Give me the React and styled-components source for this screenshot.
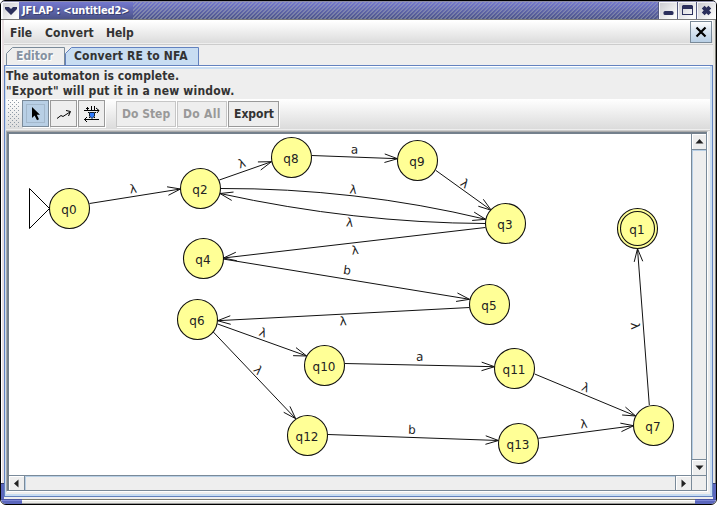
import React from "react";
import styled, { createGlobalStyle } from "styled-components";

const Global = createGlobalStyle`
  * { box-sizing: border-box; }
  html, body { margin: 0; padding: 0; background: #fff; overflow: hidden; }
  body { font-family: "DejaVu Sans Condensed", "DejaVu Sans", sans-serif; font-size: 12px; color: #333; }
  svg { display: block; }
`;

const Window = styled.div`
  width: 717px;
  height: 505px;
  display: flex;
  flex-direction: column;
  border: 1px solid #000;
  border-radius: 5px 5px 6px 6px;
  background: #eee;
  overflow: hidden;
`;

const TitleBar = styled.div`
  height: 19px;
  flex: none;
  display: flex;
  border-top: 1px solid #8c8ca8;
  border-bottom: 1px solid #7b7b7b;
  background: linear-gradient(#7478cf, #4a5288);
`;

const TitleText = styled.div`
  width: 114px;
  flex: none;
  padding-left: 3px;
  line-height: 17px;
  font-size: 11px;
  font-weight: bold;
  letter-spacing: -0.15px;
  white-space: pre;
  color: #fff;
  text-shadow: 1px 1px 0 #39406f;
`;

const Hatch = styled.div`
  flex: 1;
  background: repeating-linear-gradient(135deg, rgba(165, 172, 185, 0.5) 0 0.75px, transparent 1.2px 2.4px, rgba(165, 172, 185, 0.5) 2.83px);
`;

const TitleButton = styled.div`
  width: ${(p) => p.$w || 19}px;
  flex: none;
  border-left: 1px solid ${(p) => (p.$first ? "#fff" : "#555a80")};
  background: linear-gradient(135deg, #c9c9cf, #fafafa 85%);
  box-shadow: inset 1px 1px 0 #f6f6fa;
  display: flex;
  align-items: center;
  justify-content: center;
`;

const Body = styled.div`
  flex: 1;
  min-height: 0;
  display: flex;
`;

const LeftEdge = styled.div`
  width: 3px;
  border-left: 1px solid #fff;
  background: #e8dfe2;
  display: flex;
  flex-direction: column;
  justify-content: flex-end;
`;

const RightEdge = styled.div`
  width: 3px;
  border-right: 1px solid #84847c;
  background: #e6e6e2;
  display: flex;
  flex-direction: column;
  justify-content: flex-end;
`;

const SideGrip = styled.div`
  height: 16px;
  margin: 0 ${(p) => (p.$right ? -1 : 0)}px 0 ${(p) => (p.$right ? 0 : -1)}px;
  background: #5b67bd;
  border-top: 1px solid #39406f;
`;

const BottomEdge = styled.div`
  height: 5px;
  flex: none;
  display: flex;
  background: linear-gradient(#77796f 0 1px, #fff 1px 2px, #e9e9e5 2px 4px, #999 4px);
`;

const Grip = styled.div`
  width: 21px;
  background: linear-gradient(#4a55a5 0 1px, #7c86d8 1px 2px, #5b67bd 2px);
`;

const Spacer = styled.div`
  flex: 1;
`;

const Content = styled.div`
  flex: 1;
  min-width: 0;
  display: flex;
  flex-direction: column;
  padding-bottom: 2px;
  font-weight: bold;
`;

const MenuBar = styled.div`
  height: 25px;
  flex: none;
  display: flex;
  background: linear-gradient(#fff 5%, #dadada);
  border-bottom: 1px solid #ccc;
  box-shadow: inset 0 -1px 0 #eee;
  padding: 1px 1px 0 6px;
`;

const MenuItem = styled.div`
  width: ${(p) => p.$w}px;
  line-height: 24px;
  letter-spacing: ${(p) => p.$ls || 0}px;
`;

const CloseButton = styled.div`
  width: 22px;
  height: 22px;
  border: 1px solid #7a8a99;
  background: linear-gradient(#fff, #dfe9f3 35%, #b8cfe5);
  display: flex;
  align-items: center;
  justify-content: center;
`;

const Tabs = styled.div`
  height: 20px;
  flex: none;
  display: flex;
  padding: 2px 0 0 2px;
`;

const Tab = styled.div`
  width: ${(p) => p.$w}px;
  height: 19px;
  display: grid;
  margin-bottom: -1px;
  & > * { grid-area: 1 / 1; }
`;

const TabLabel = styled.div`
  padding-left: ${(p) => p.$pad}px;
  line-height: 18px;
  color: ${(p) => (p.$dim ? "#8592a2" : "#333")};
  text-shadow: ${(p) => (p.$dim ? "1px 1px 0 #fff" : "none")};
  letter-spacing: ${(p) => p.$ls || 0}px;
  white-space: pre;
`;

const Pane = styled.div`
  flex: 1;
  min-height: 0;
  display: flex;
  flex-direction: column;
  border: 1px solid #6382bf;
  box-shadow: inset -2px -2px 0 #c8ddf2, inset 1px 0 0 #c8ddf2;
  padding: 0 2px 2px 1px;
`;

const PaneTop = styled.div`
  height: 3px;
  flex: none;
  background: linear-gradient(#fff 0 1px, #c8ddf2 1px);
`;

const Message = styled.div`
  height: 15px;
  flex: none;
  line-height: 15px;
  letter-spacing: ${(p) => p.$ls}px;
  white-space: pre;
`;

const Toolbar = styled.div`
  height: 32px;
  flex: none;
  display: flex;
  align-items: flex-start;
  padding: 1px 0 0 2px;
  background: linear-gradient(#fff, #dadada);
  border-bottom: 1px solid #ccc;
  box-shadow: inset 0 -1px 0 #eee;
`;

const Handle = styled.svg`
  width: 11px;
  height: 28px;
  margin-right: 3px;
`;

const Gap = styled.div`
  width: 10px;
`;

const ToolButton = styled.div`
  width: 27px;
  height: 27px;
  margin-right: 1px;
  display: flex;
  align-items: center;
  justify-content: center;
  border: 1px solid ${(p) => (p.$on ? "#7a8a99" : "#999")};
  background: ${(p) => (p.$on ? "#b8cfe5" : "#eee")};
  box-shadow: 1px 1px 0 #fff;
`;

const TextButton = styled.div`
  width: ${(p) => p.$w}px;
  height: 26px;
  margin: 1px 1px 0 0;
  padding-left: 5px;
  line-height: 25px;
  white-space: pre;
  border: 1px solid ${(p) => (p.$off ? "#c6c6c6" : "#999")};
  background: #eee;
  box-shadow: 1px 1px 0 #fff;
  color: ${(p) => (p.$off ? "#999" : "#333")};
  letter-spacing: ${(p) => p.$ls || 0}px;
`;

const ScrollFrame = styled.div`
  flex: 1;
  min-height: 0;
  margin: 0 2px 2px 0;
  border-top: 1px solid #aaa;
  border-left: 1px solid #aaa;
  border-right: 1px solid #fff;
  border-bottom: 1px solid #fff;
  background: #fff;
  display: flex;
`;

const ScrollPane = styled.div`
  flex: 1;
  border: 1px solid #7a8a99;
  border-top: 2px solid #74808c;
  border-left: 2px solid #74808c;
  display: grid;
  grid-template-columns: 1fr 15px;
  grid-template-rows: 1fr 15px;
`;

const VBar = styled.div`
  display: flex;
  flex-direction: column;
  border-left: 1px solid #7a8a99;
  background: #eee;
`;

const HBar = styled.div`
  display: flex;
  border-top: 1px solid #7a8a99;
  background: #eee;
`;

const Arrow = styled.div`
  flex: none;
  width: ${(p) => (p.$v ? 14 : 16)}px;
  height: ${(p) => (p.$v ? 16 : 14)}px;
  background: #eee;
  border: 0 solid #7a8a99;
  border-${(p) => p.$side}-width: 1px;
  box-shadow: inset 1px 1px 0 #fff;
  display: flex;
  align-items: center;
  justify-content: center;
`;

const Track = styled.div`
  flex: 1;
  box-shadow: inset 1px 1px 0 #b8cfe5;
`;

const Corner = styled.div`
  border-left: 1px solid #7a8a99;
  border-top: 1px solid #7a8a99;
  background: #eee;
`;

const Diagram = styled.svg`
  font-family: "DejaVu Sans", sans-serif;
  font-size: 12px;
  font-weight: normal;
  fill: #222;
`;

const NODES = [
  ["q0", 69.5, 208.5], ["q2", 200.5, 188.5], ["q8", 291.5, 157.5], ["q9", 417.5, 160.5],
  ["q3", 505.5, 223.5], ["q4", 203.5, 258.5], ["q5", 489.5, 304.5], ["q6", 197.5, 319.5],
  ["q10", 324.5, 365.5], ["q11", 514.5, 368.5], ["q12", 307.5, 435.5], ["q13", 518.5, 443.5],
  ["q7", 653.5, 425.5], ["q1", 637.5, 228.5],
];

/* start, end, label, label centre, label angle, optional curve control point */
const EDGES = [
  [89.5, 203.5, 180.5, 189, "λ", 133, 188.7, -9],
  [219.3, 180, 271.5, 161.7, "λ", 241.7, 163.3, -19],
  [220.5, 188.5, 485.7, 219.3, "λ", 353.3, 189.3, 6, 355, 188],
  [485.5, 223.5, 220, 193.5, "λ", 349.7, 222.3, 6, 355, 223],
  [311.7, 155.5, 397.5, 158.7, "a", 354.5, 149.3, 2],
  [435.7, 170.3, 491.3, 210.3, "λ", 465, 183.3, 36],
  [485.3, 227.5, 223.5, 258, "λ", 355, 250, -7],
  [223, 259, 469.5, 299.3, "b", 347.3, 270, 9],
  [469.5, 307.5, 217.6, 320.7, "λ", 343, 321, -3],
  [217.6, 324, 306.7, 356, "λ", 263, 332.3, 20],
  [213.3, 332, 295.7, 418.7, "λ", 258.3, 370, 46],
  [344.7, 363.5, 494.5, 366.7, "a", 419.7, 356.5, 1],
  [328, 434.5, 498.5, 440.5, "b", 412, 429.5, 2],
  [534.7, 374, 635.7, 416, "λ", 585.7, 387.3, 22],
  [538.3, 438.3, 633.7, 425.7, "λ", 583.7, 423.7, -7],
  [649.3, 405, 637.5, 248.7, "λ", 635.3, 326, 86],
];

function Edge({ edge }) {
  const [x1, y1, x2, y2, text, lx, ly, rot, cx, cy] = edge;
  const fx = cx ?? x1;
  const fy = cy ?? y1;
  const back = Math.atan2(fy - y2, fx - x2);
  const barb = (d) => `${x2 + 13.6 * Math.cos(back + d)} ${y2 + 13.6 * Math.sin(back + d)}`;
  const shaft = cx ? `M${x1} ${y1}Q${cx} ${cy} ${x2} ${y2}` : `M${x1} ${y1}L${x2} ${y2}`;
  return (
    <g>
      <path d={`${shaft}M${barb(0.32)}L${x2} ${y2}L${barb(-0.32)}`} fill="none" stroke="#111" />
      <text transform={`translate(${lx} ${ly}) rotate(${rot})`} y="4.3" textAnchor="middle">{text}</text>
    </g>
  );
}

function Automaton() {
  return (
    <Diagram width="682" height="341" viewBox="9 134 682 341">
      <path d="M49.5 208.5L29.5 188.5V228.5Z" fill="#fff" stroke="#000" />
      {EDGES.map((e, i) => <Edge key={i} edge={e} />)}
      {NODES.map(([name, x, y]) => (
        <g key={name}>
          <circle cx={x} cy={y} r="20" fill="#ffff96" stroke="#111" strokeWidth="1.1" />
          {name === "q1" && <circle cx={x} cy={y} r="17" fill="none" stroke="#111" strokeWidth="1.1" />}
          <text x={x - 0.5} y={y + 5} textAnchor="middle">{name}</text>
        </g>
      ))}
    </Diagram>
  );
}

const Tri = ({ d }) => (
  <svg width="9" height="9"><path d={d} fill="#222" /></svg>
);

export default function App() {
  return (
    <>
      <Global />
      <Window>
        <TitleBar>
          <TitleButton $w={18} $first>
            <svg width="12" height="9"><path d="M0 1H4L6 3L8 1H12V3L6 9L0 3Z" fill="#2b2f5c" /></svg>
          </TitleButton>
          <TitleText>{"JFLAP : <untitled2>"}</TitleText>
          <Hatch />
          <TitleButton>
            <svg width="11" height="11"><rect x="0.5" y="6" width="10" height="4" rx="1.5" fill="#2b2f5c" /></svg>
          </TitleButton>
          <TitleButton>
            <svg width="11" height="11"><path d="M1 0H10L11 1V10H0V1ZM1 4V9H10V4Z" fillRule="evenodd" fill="#2b2f5c" /></svg>
          </TitleButton>
          <TitleButton $w={20}>
            <svg width="11" height="11"><path d="M2.2 2.2L8.8 8.8M8.8 2.2L2.2 8.8" stroke="#2b2f5c" strokeWidth="4" /></svg>
          </TitleButton>
        </TitleBar>
        <Body>
          <LeftEdge><SideGrip /></LeftEdge>
          <Content>
            <MenuBar>
              <MenuItem $w={35}>File</MenuItem>
              <MenuItem $w={61} $ls={0.15}>Convert</MenuItem>
              <MenuItem $w={40}>Help</MenuItem>
              <Spacer />
              <CloseButton>
                <svg width="12" height="12"><path d="M1.5 1.5L10.5 10.5M10.5 1.5L1.5 10.5" stroke="#000" strokeWidth="2.2" /></svg>
              </CloseButton>
            </MenuBar>
            <Tabs>
              <Tab $w={59}>
                <svg width="59" height="19"><path d="M0.5 19V6.5L6.5 0.5H58.5V19" fill="#eee" stroke="#7a8a99" /></svg>
                <TabLabel $pad={10} $dim>Editor</TabLabel>
              </Tab>
              <Tab $w={134}>
                <svg width="134" height="19"><path d="M0.5 19V6.5L6.5 0.5H133.5V19" fill="#c8ddf2" stroke="#6382bf" /></svg>
                <TabLabel $pad={9} $ls={0.17}>Convert RE to NFA</TabLabel>
              </Tab>
            </Tabs>
            <Pane>
              <PaneTop />
              <Message $ls={0.1}>The automaton is complete.</Message>
              <Message $ls={0.19}>"Export" will put it in a new window.</Message>
              <Toolbar>
                <Handle>
                  <defs>
                    <pattern id="dots" width="4" height="4" patternUnits="userSpaceOnUse">
                      <path d="M0 0H1V1H0ZM2 2H3V3H2Z" fill="#8e9aa6" />
                    </pattern>
                  </defs>
                  <rect width="11" height="28" fill="url(#dots)" />
                </Handle>
                <ToolButton $on>
                  <svg width="19" height="19">
                    <rect x="0.5" y="0.5" width="18" height="18" fill="none" stroke="#a3b8cc" />
                    <path d="M6 3V14L8.6 11.6L11 16.2L13 15.2L10.8 10.8H14Z" fill="#000" />
                  </svg>
                </ToolButton>
                <ToolButton>
                  <svg width="17" height="17"><path d="M2 13.5L6 10.5L8 11.5L15 7M11 5.5L15.5 6.5L13.5 11" fill="none" stroke="#000" /></svg>
                </ToolButton>
                <ToolButton>
                  <svg width="18" height="18">
                    <path d="M1 5.5H16M13 3L16 5.5L14 8M1 14.5H16M4 12L1.5 14.5L4 17M3 3.5H6M4.5 2V5M8.5 1V5M11.5 1V5M5 7L7 9M13 7L11 9M6 13L7 12M12 13L11 12" fill="none" stroke="#000" />
                    <path d="M6.5 7.5H11.5V11L9 13.5L6.5 11Z" fill="#2f7bff" stroke="#123" />
                  </svg>
                </ToolButton>
                <Gap />
                <TextButton $w={60} $off>Do Step</TextButton>
                <TextButton $w={50} $ls={0.3} $off>Do All</TextButton>
                <TextButton $w={51}>Export</TextButton>
              </Toolbar>
              <ScrollFrame>
                <ScrollPane>
                  <Automaton />
                  <VBar>
                    <Arrow $v $side="bottom"><Tri d="M0.5 6.5L4.5 2L8.5 6.5Z" /></Arrow>
                    <Track />
                    <Arrow $v $side="top"><Tri d="M0.5 2.5L4.5 7L8.5 2.5Z" /></Arrow>
                  </VBar>
                  <HBar>
                    <Arrow $side="right"><Tri d="M6.5 0.5L2 4.5L6.5 8.5Z" /></Arrow>
                    <Track />
                    <Arrow $side="left"><Tri d="M2.5 0.5L7 4.5L2.5 8.5Z" /></Arrow>
                  </HBar>
                  <Corner />
                </ScrollPane>
              </ScrollFrame>
            </Pane>
          </Content>
          <RightEdge><SideGrip $right /></RightEdge>
        </Body>
        <BottomEdge><Grip /><Spacer /><Grip /></BottomEdge>
      </Window>
    </>
  );
}
